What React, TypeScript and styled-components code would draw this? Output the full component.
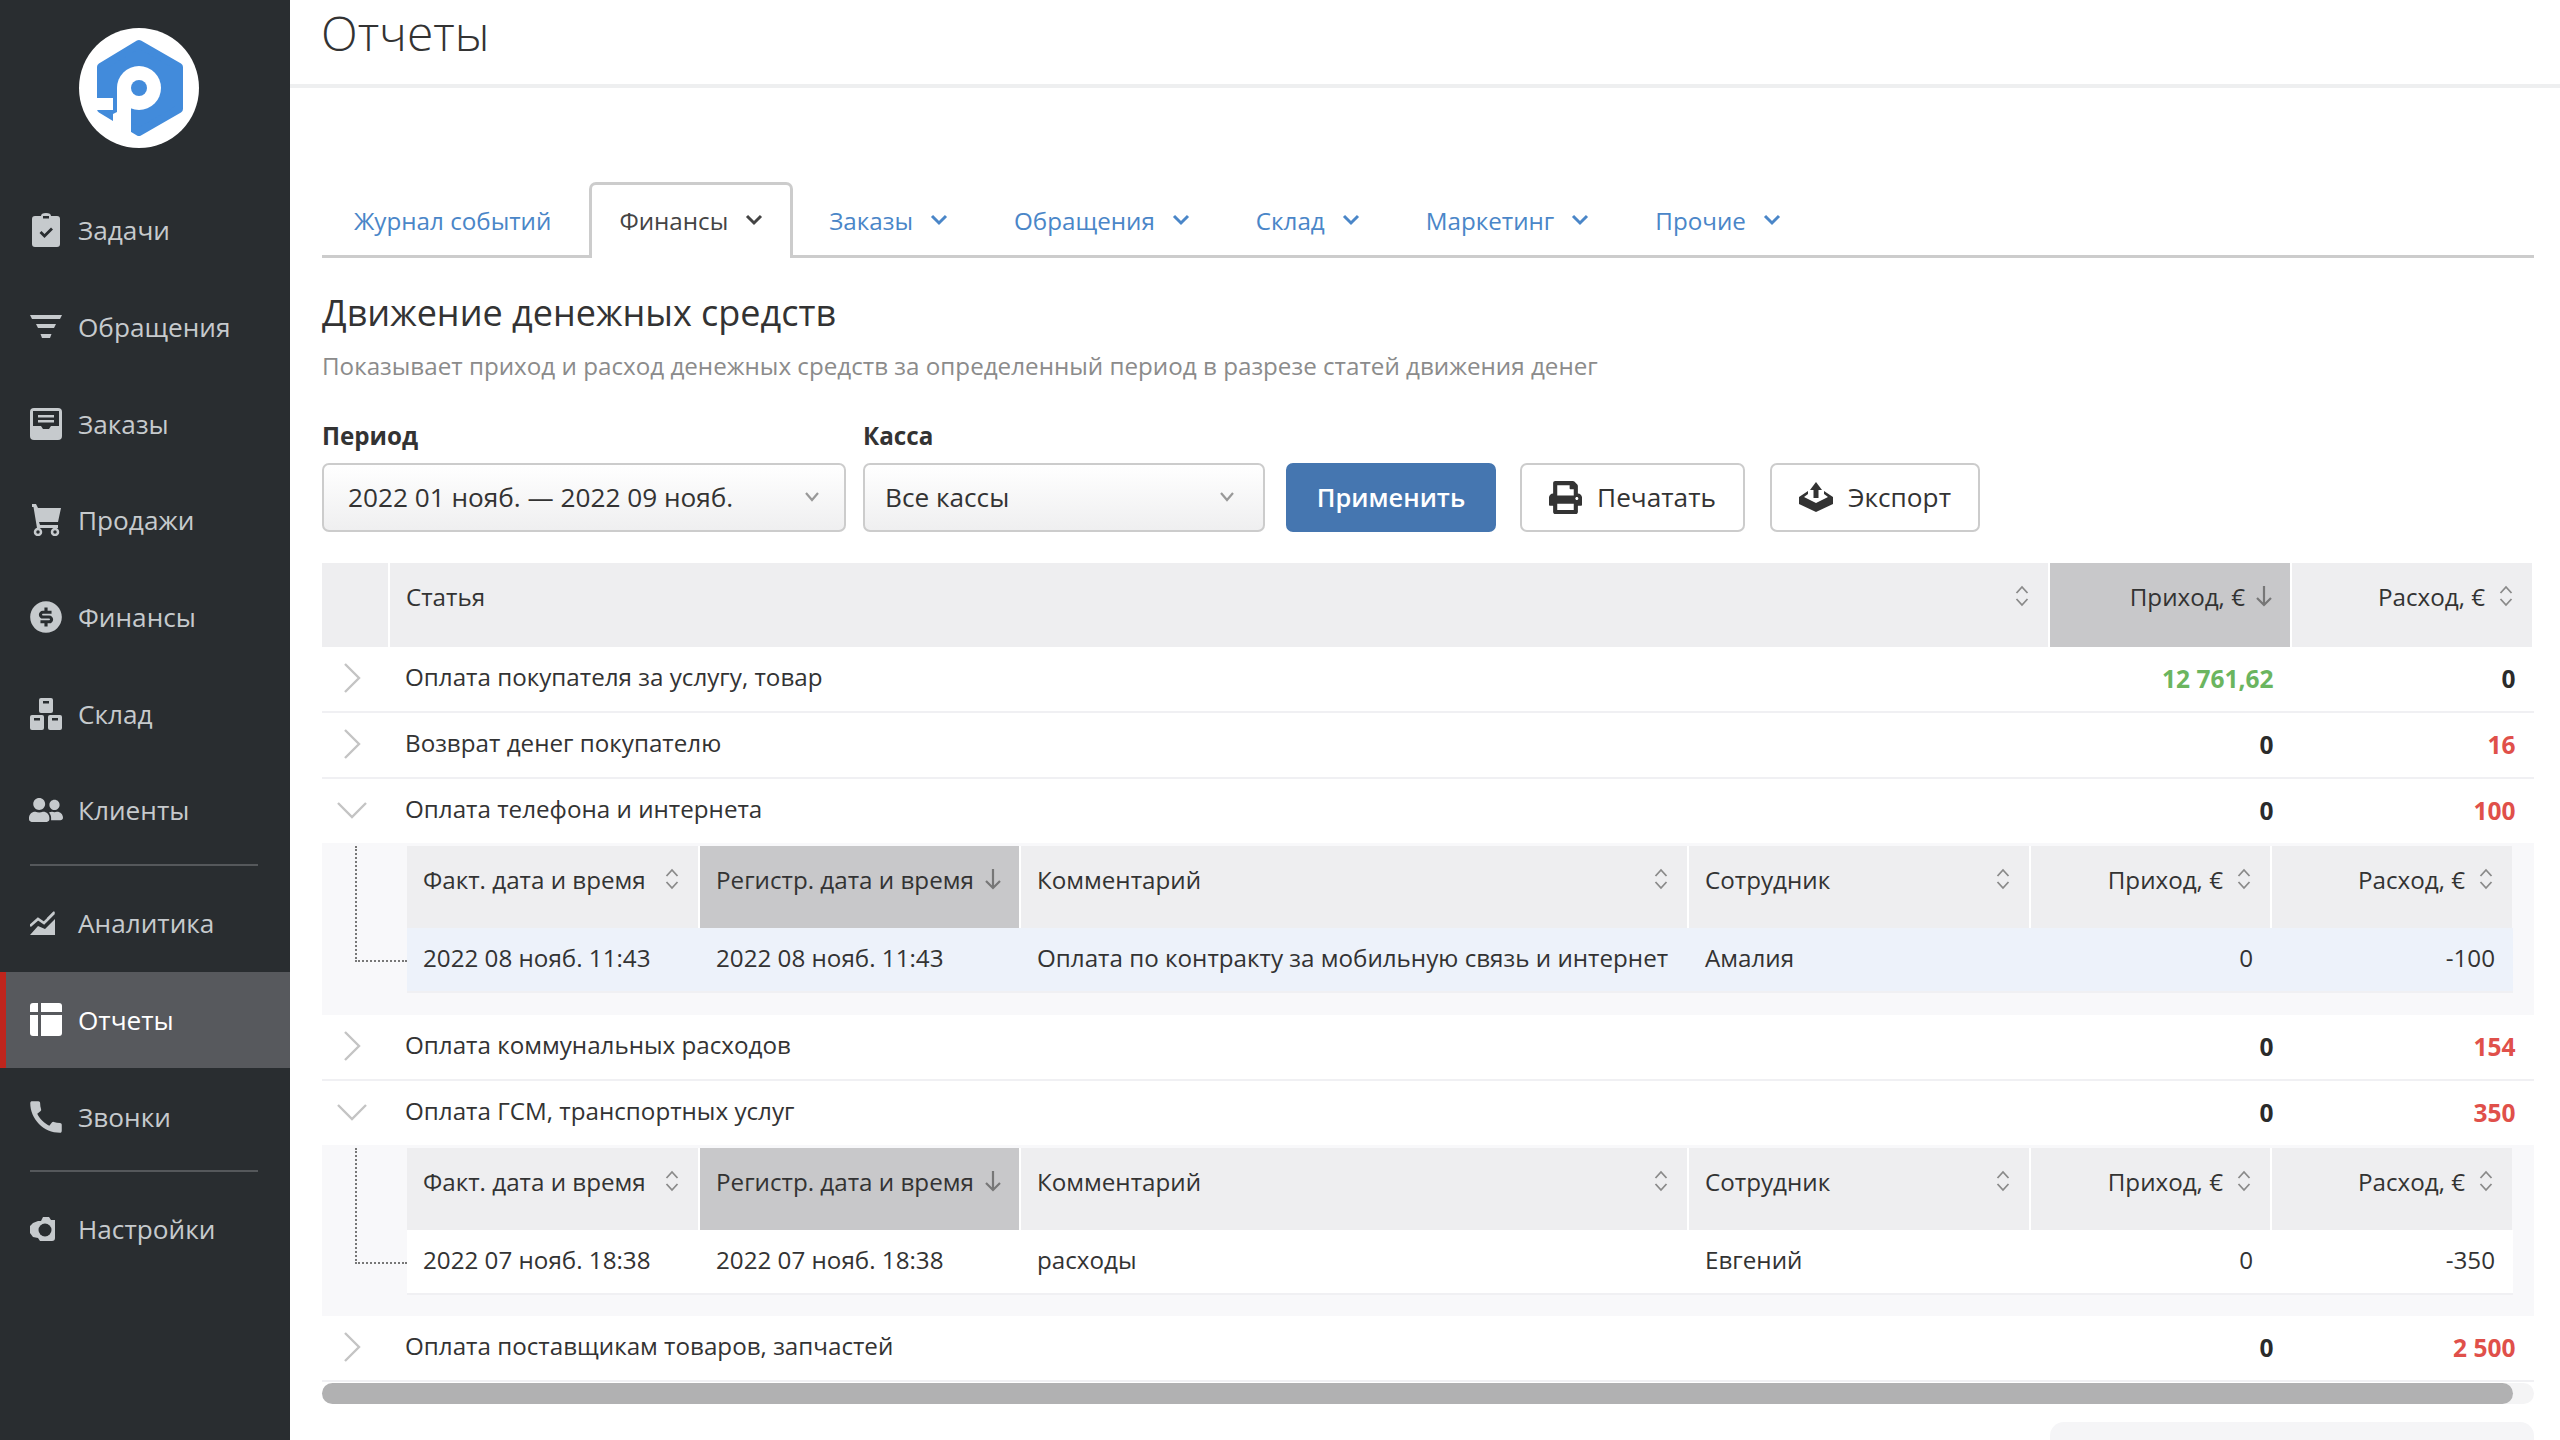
import React from "react";
import styled, { createGlobalStyle } from "styled-components";
import { FaPrint, FaUserFriends } from "react-icons/fa";
import { RiMoneyDollarCircleFill } from "react-icons/ri";
import { MdCall } from "react-icons/md";

const GlobalStyle = createGlobalStyle`
  html, body {
    margin: 0;
    padding: 0;
    background: #fff;
    font-family: "Open Sans", "Liberation Sans", sans-serif;
    color: #333;
  }
  * { box-sizing: border-box; }
`;

const Page = styled.div`
  display: flex;
  width: 2560px;
  height: 1440px;
  overflow: hidden;
`;

const Sidebar = styled.aside`
  width: 290px;
  flex-shrink: 0;
  background: #292d30;
  display: flex;
  flex-direction: column;
`;

const LogoWrap = styled.div`
  height: 182px;
  display: flex;
  justify-content: center;
  padding: 28px 13px 0 0;
`;

const NavItem = styled.div<{ $active?: boolean }>`
  height: 96.7px;
  display: flex;
  align-items: center;
  gap: 16px;
  padding-left: ${(p) => (p.$active ? "24px" : "30px")};
  font-size: 26.2px;
  color: ${(p) => (p.$active ? "#fff" : "#c6cacd")};
  background: ${(p) => (p.$active ? "#57595d" : "transparent")};
  border-left: ${(p) => (p.$active ? "6px solid #bf251d" : "0")};
`;

const NavIcon = styled.span`
  width: 32px;
  height: 34px;
  display: flex;
  align-items: center;
  justify-content: center;
  flex-shrink: 0;

  svg {
    flex-shrink: 0;
  }
`;

const NavDivider = styled.div`
  height: 2px;
  width: 228px;
  margin: 5px 0 9px 30px;
  background: #55585b;
`;

const Main = styled.main`
  flex: 1;
  min-width: 0;
`;

const Header = styled.header`
  height: 88px;
  padding-left: 31px;
  border-bottom: 4px solid #eeeff0;
`;

const Title = styled.h1`
  margin: 0;
  font-size: 48px;
  font-weight: 300;
  line-height: 66px;
  color: #333;
`;

const Content = styled.div`
  padding: 0 26px 0 32px;
`;

const TabBar = styled.nav`
  display: flex;
  height: 76px;
  margin-top: 94px;
  border-bottom: 3px solid #ccc;
`;

const Tab = styled.div<{ $active?: boolean }>`
  display: flex;
  align-items: center;
  gap: 17px;
  height: ${(p) => (p.$active ? "76px" : "73px")};
  padding: ${(p) => (p.$active ? "0 27px 3px" : "3px 32px 0")};
  margin-right: ${(p) => (p.$active ? "4px" : "2px")};
  font-size: 24.2px;
  color: ${(p) => (p.$active ? "#444" : "#4a86c8")};
  background: #fff;
  ${(p) =>
    p.$active &&
    `border: 3px solid #ccc; border-bottom: 0; border-radius: 7px 7px 0 0;`}

  &:first-child {
    margin-right: 6px;
  }
`;

const SectionTitle = styled.h2`
  margin: 30px 0 0;
  font-size: 36px;
  font-weight: 400;
  line-height: 50px;
  color: #333;
`;

const Subtitle = styled.p`
  margin: 10px 0 0;
  font-size: 24.2px;
  line-height: 36px;
  color: #8b8b8b;
`;

const Filters = styled.div`
  display: flex;
  align-items: flex-end;
  margin-top: 35px;
`;

const Field = styled.div<{ $width: number; $gap: number }>`
  width: ${(p) => p.$width}px;
  margin-right: ${(p) => p.$gap}px;
`;

const FieldLabel = styled.div`
  font-size: 24.2px;
  font-weight: 700;
  line-height: 34px;
  margin-bottom: 10px;
  color: #333;
`;

const SelectBox = styled.div<{ $pad: number; $arrowPad: number }>`
  height: 69px;
  display: flex;
  align-items: center;
  justify-content: space-between;
  padding: 0 ${(p) => p.$arrowPad}px 2px ${(p) => p.$pad}px;
  border: 2px solid #ccc;
  border-radius: 7px;
  background: linear-gradient(#fff, #efeff0);
  font-size: 26.2px;
  color: #333;
`;

const Button = styled.div<{ $width: number; $gap: number; $primary?: boolean }>`
  width: ${(p) => p.$width}px;
  margin-right: ${(p) => p.$gap}px;
  height: 69px;
  display: flex;
  align-items: center;
  justify-content: center;
  gap: 15px;
  padding-bottom: 1px;
  border-radius: 7px;
  font-size: ${(p) => (p.$primary ? "25.4px" : "26.2px")};
  font-weight: ${(p) => (p.$primary ? 600 : 400)};
  color: ${(p) => (p.$primary ? "#fff" : "#333")};
  background: ${(p) => (p.$primary ? "#4576b0" : "#fff")};
  border: 2px solid ${(p) => (p.$primary ? "#4576b0" : "#ccc")};
`;

const Table = styled.div`
  margin-top: 31px;
`;

const OuterHead = styled.div`
  display: grid;
  grid-template-columns: 66px 1fr 240px 240px;
  column-gap: 2px;
  height: 84px;
  padding-right: 2px;
`;

const OuterRow = styled.div<{ $open?: boolean }>`
  display: grid;
  grid-template-columns: 66px 1fr 240px 240px;
  column-gap: 2px;
  align-items: center;
  height: ${(p) => (p.$open ? "64px" : "66px")};
  padding: 0 2px 1.5px 0;
  border-bottom: ${(p) => (p.$open ? "0" : "2px solid #f0f0f3")};
  font-size: 24.2px;
  color: #333;
`;

const Chevron = styled.div`
  display: flex;
  justify-content: center;
  padding-right: 7px;
`;

const HeadCell = styled.div<{ $sorted?: boolean; $right?: boolean }>`
  display: flex;
  justify-content: ${(p) => (p.$right ? "flex-end" : "space-between")};
  gap: ${(p) => (p.$sorted ? "10px" : "14px")};
  padding: 16px ${(p) => (p.$sorted ? "17px" : "19px")} 0 16px;
  font-size: 24.2px;
  line-height: 36px;
  white-space: nowrap;
  color: #333;
  background: ${(p) => (p.$sorted ? "#c8c8ca" : "#eeeef0")};
`;

const RowName = styled.div`
  padding-left: 15px;
  margin-top: -4px;
`;

const Amount = styled.div<{ $tone?: "green" | "red" }>`
  text-align: right;
  padding-right: 16.5px;
  font-size: 24.5px;
  font-weight: 700;
  color: ${(p) =>
    p.$tone === "green" ? "#6bb55f" : p.$tone === "red" ? "#e0504a" : "#2b2b2b"};
`;

const SubWrap = styled.div<{ $bottom: number }>`
  position: relative;
  background: #f8f8fa;
  padding: 3px 0 ${(p) => p.$bottom}px 85px;
`;

const Connector = styled.div`
  position: absolute;
  left: 33px;
  top: 3px;
  width: 52px;
  height: 116px;
  border-left: 2px dotted #777;
  border-bottom: 2px dotted #777;
`;

const SubHead = styled.div`
  display: grid;
  grid-template-columns: 291px 319px 666px 340px 239px 240px;
  column-gap: 2px;
  height: 82px;
  width: 2105px;
  background: #fff;
`;

const SubRow = styled.div<{ $selected?: boolean }>`
  display: grid;
  grid-template-columns: 291px 319px 666px 340px 239px 240px;
  column-gap: 2px;
  align-items: center;
  height: 65px;
  width: 2106px;
  font-size: 24.2px;
  color: #333;
  background: ${(p) => (p.$selected ? "#edf2fa" : "#fff")};
  border-bottom: 2px solid #f0f0f3;
`;

const SubCell = styled.div<{ $right?: boolean }>`
  padding: 0 ${(p) => (p.$right ? "17px" : "16px")} 4px 16px;
  text-align: ${(p) => (p.$right ? "right" : "left")};
  white-space: nowrap;
`;

const ScrollTrack = styled.div`
  height: 21px;
  margin-top: 1px;
  background: #f4f4f5;
  border-radius: 11px;
`;

const ScrollThumb = styled.div`
  height: 21px;
  width: 2191px;
  background: #b1b1b2;
  border-radius: 11px;
`;

const BottomRow = styled.div`
  display: flex;
  justify-content: flex-end;
  margin-top: 18px;
`;

const TotalsBox = styled.div`
  width: 484px;
  height: 60px;
  background: #f5f5f7;
  border-radius: 14px 14px 0 0;
`;

const Logo = () => (
  <svg width="120" height="120" viewBox="-60 -60 120 120">
    <circle r="60" fill="#fff" />
    <path
      d="M0 -44 L40 -21 L40 21 L0 44 L-38 21 L-38 -21 Z"
      fill="#428bdb"
      stroke="#428bdb"
      strokeWidth="8"
      strokeLinejoin="round"
    />
    <path d="M-44 10 H-26 V22 H-44 Z" fill="#fff" />
    <circle r="22" fill="#fff" />
    <path d="M-22 0 H-8 V50 H-22 Z" fill="#fff" />
    <path d="M-26 26 L-22 24 V48 L-8 48 V52 H-26 Z" fill="#fff" />
    <circle r="8" fill="#428bdb" />
  </svg>
);

const TasksIcon = () => (
  <svg width="28" height="34" viewBox="0 0 28 34">
    <path d="M9 3 Q9 0 14 0 Q19 0 19 3 L25 3 Q28 3 28 6 V31 Q28 34 25 34 H3 Q0 34 0 31 V6 Q0 3 3 3 Z" fill="currentColor" />
    <path d="M8.5 19 L12.5 23 L20 15.5" fill="none" stroke="#292d30" strokeWidth="2.8" />
    <rect x="11" y="3" width="6" height="2.5" fill="#292d30" />
  </svg>
);

const FilterIcon = () => (
  <svg width="32" height="24" viewBox="0 0 32 24">
    <path d="M0 0 H32 L30 4 H2 Z M6 9 H26 L24 13 H8 Z M10.5 19 H21.5 L20 23 H12 Z" fill="currentColor" />
  </svg>
);

const OrdersIcon = () => (
  <svg width="32" height="32" viewBox="0 0 32 32">
    <rect width="32" height="32" rx="4" fill="currentColor" />
    <path d="M3 3 H29 V18 H21 L19 21 H13 L11 18 H3 Z" fill="#292d30" />
    <rect x="8" y="7" width="16" height="2.5" fill="currentColor" />
    <rect x="8" y="12" width="16" height="2.5" fill="currentColor" />
  </svg>
);

const CartIcon = () => (
  <svg width="30" height="32" viewBox="0 0 30 32">
    <path d="M1 0 H5 L7 4 H30 L27 18 H8 L9 21 H27 V24 H6 L2.5 3 H1 Z" fill="currentColor" />
    <circle cx="7" cy="28" r="3" fill="none" stroke="currentColor" strokeWidth="2.5" />
    <circle cx="24" cy="28" r="3" fill="none" stroke="currentColor" strokeWidth="2.5" />
  </svg>
);

const StockIcon = () => (
  <svg width="32" height="32" viewBox="0 0 32 32">
    <rect x="9" width="14" height="15" rx="2" fill="currentColor" />
    <rect y="17" width="14" height="15" rx="2" fill="currentColor" />
    <rect x="18" y="17" width="14" height="15" rx="2" fill="currentColor" />
    <rect x="13" y="3" width="6" height="2.5" fill="#292d30" />
    <rect x="4" y="20" width="6" height="2.5" fill="#292d30" />
    <rect x="22" y="20" width="6" height="2.5" fill="#292d30" />
  </svg>
);

const ChartIcon = () => (
  <svg width="32" height="26" viewBox="0 0 32 26">
    <path d="M0 16 L8 9 L14 13 L24 3" fill="none" stroke="currentColor" strokeWidth="2.6" />
    <path d="M0 25 L8 16 L15 19 L25 9 V25 Z" fill="currentColor" />
    <path d="M17 8 L24 1 L25 3 L18 10 Z" fill="currentColor" />
  </svg>
);

const ReportsIcon = () => (
  <svg width="32" height="33" viewBox="0 0 32 33">
    <path d="M3 0 H8 V9 H0 V3 Q0 0 3 0 Z" fill="currentColor" />
    <path d="M11 0 H29 Q32 0 32 3 V9 H11 Z" fill="currentColor" />
    <path d="M0 12 H8 V33 H3 Q0 33 0 30 Z" fill="currentColor" />
    <path d="M11 12 H32 V30 Q32 33 29 33 H11 Z" fill="currentColor" />
  </svg>
);

const SettingsIcon = () => (
  <svg width="32" height="26" viewBox="0 0 32 26">
    <path d="M8 5 L11 5 L13 1 H19 L21 4 H25 V22 Q25 25 22 25 H10 L8 22 L3 21 L0 17 V10 L3 7 Z" fill="currentColor" />
    <circle cx="15" cy="14" r="6.5" fill="#292d30" />
  </svg>
);

const ExportIcon = () => (
  <svg width="34" height="30" viewBox="0 0 34 30">
    <path d="M17 0 L23 8 H19.5 V16 H14.5 V8 H11 Z" fill="#333" />
    <path d="M9 9 L0 15 V22 L17 30 L34 22 V15 L25 9 V12 L29 15 L17 21 L5 15 L9 12 Z" fill="#333" />
  </svg>
);

const SmallChevron = ({ color }: { color: string }) => (
  <svg width="18" height="12" viewBox="0 0 18 12">
    <path d="M2 2 L9 9 L16 2" fill="none" stroke={color} strokeWidth="3" />
  </svg>
);

const SelectChevron = () => (
  <svg width="16" height="12" viewBox="0 0 16 12">
    <path d="M2 2 L8 9 L14 2" fill="none" stroke="#999" strokeWidth="2.2" />
  </svg>
);

const SortIcon = () => (
  <svg width="14" height="22" viewBox="0 0 14 22" style={{ flexShrink: 0, marginTop: 6 }}>
    <path d="M1.5 8 L7 2 L12.5 8 M1.5 14 L7 20 L12.5 14" fill="none" stroke="#8a8a8a" strokeWidth="1.8" />
  </svg>
);

const SortedIcon = () => (
  <svg width="18" height="22" viewBox="0 0 18 22" style={{ flexShrink: 0, marginTop: 6 }}>
    <path d="M9 1 V20 M2 13 L9 20 L16 13" fill="none" stroke="#777" strokeWidth="2.2" />
  </svg>
);

const RowRight = () => (
  <svg width="18" height="30" viewBox="0 0 18 30">
    <path d="M2 1 L16 15 L2 29" fill="none" stroke="#c4c4c4" strokeWidth="2.4" />
  </svg>
);

const RowDown = () => (
  <svg width="30" height="18" viewBox="0 0 30 18">
    <path d="M1 2 L15 16 L29 2" fill="none" stroke="#c4c4c4" strokeWidth="2.4" />
  </svg>
);

const navTop = [
  { label: "Задачи", icon: <TasksIcon /> },
  { label: "Обращения", icon: <FilterIcon /> },
  { label: "Заказы", icon: <OrdersIcon /> },
  { label: "Продажи", icon: <CartIcon /> },
  { label: "Финансы", icon: <RiMoneyDollarCircleFill size={38} /> },
  { label: "Склад", icon: <StockIcon /> },
  { label: "Клиенты", icon: <FaUserFriends size={34} /> },
];

const tabs = ["Финансы", "Заказы", "Обращения", "Склад", "Маркетинг", "Прочие"];

function SubTable(props: {
  date: string;
  comment: string;
  person: string;
  amount: string;
  selected?: boolean;
  bottom: number;
}) {
  return (
    <SubWrap $bottom={props.bottom}>
      <Connector />
      <SubHead>
        <HeadCell>
          Факт. дата и время
          <SortIcon />
        </HeadCell>
        <HeadCell $sorted>
          Регистр. дата и время
          <SortedIcon />
        </HeadCell>
        <HeadCell>
          Комментарий
          <SortIcon />
        </HeadCell>
        <HeadCell>
          Сотрудник
          <SortIcon />
        </HeadCell>
        <HeadCell $right>
          Приход, €
          <SortIcon />
        </HeadCell>
        <HeadCell $right>
          Расход, €
          <SortIcon />
        </HeadCell>
      </SubHead>
      <SubRow $selected={props.selected}>
        <SubCell>{props.date}</SubCell>
        <SubCell>{props.date}</SubCell>
        <SubCell>{props.comment}</SubCell>
        <SubCell>{props.person}</SubCell>
        <SubCell $right>0</SubCell>
        <SubCell $right>{props.amount}</SubCell>
      </SubRow>
    </SubWrap>
  );
}

function Row(props: {
  name: string;
  income: string;
  expense: string;
  incomeTone?: "green";
  expenseTone?: "red";
  open?: boolean;
}) {
  return (
    <OuterRow $open={props.open}>
      <Chevron>{props.open ? <RowDown /> : <RowRight />}</Chevron>
      <RowName>{props.name}</RowName>
      <Amount $tone={props.incomeTone}>{props.income}</Amount>
      <Amount $tone={props.expenseTone}>{props.expense}</Amount>
    </OuterRow>
  );
}

export default function App() {
  return (
    <Page>
      <GlobalStyle />
      <Sidebar>
        <LogoWrap>
          <Logo />
        </LogoWrap>
        {navTop.map((item) => (
          <NavItem key={item.label}>
            <NavIcon>{item.icon}</NavIcon>
            {item.label}
          </NavItem>
        ))}
        <NavDivider />
        <NavItem>
          <NavIcon>
            <ChartIcon />
          </NavIcon>
          Аналитика
        </NavItem>
        <NavItem $active>
          <NavIcon>
            <ReportsIcon />
          </NavIcon>
          Отчеты
        </NavItem>
        <NavItem>
          <NavIcon>
            <MdCall size={42} />
          </NavIcon>
          Звонки
        </NavItem>
        <NavDivider />
        <NavItem>
          <NavIcon>
            <SettingsIcon />
          </NavIcon>
          Настройки
        </NavItem>
      </Sidebar>
      <Main>
        <Header>
          <Title>Отчеты</Title>
        </Header>
        <Content>
          <TabBar>
            <Tab>Журнал событий</Tab>
            {tabs.map((t, i) => (
              <Tab key={t} $active={i === 0}>
                {t}
                <SmallChevron color={i === 0 ? "#444" : "#4a86c8"} />
              </Tab>
            ))}
          </TabBar>
          <SectionTitle>Движение денежных средств</SectionTitle>
          <Subtitle>
            Показывает приход и расход денежных средств за определенный период в разрезе статей
            движения денег
          </Subtitle>
          <Filters>
            <Field $width={524} $gap={17}>
              <FieldLabel>Период</FieldLabel>
              <SelectBox $pad={24} $arrowPad={24}>
                2022 01 нояб. — 2022 09 нояб.
                <SelectChevron />
              </SelectBox>
            </Field>
            <Field $width={402} $gap={21}>
              <FieldLabel>Касса</FieldLabel>
              <SelectBox $pad={20} $arrowPad={28}>
                Все кассы
                <SelectChevron />
              </SelectBox>
            </Field>
            <Button $primary $width={210} $gap={24}>
              Применить
            </Button>
            <Button $width={225} $gap={25}>
              <FaPrint size={33} />
              Печатать
            </Button>
            <Button $width={210} $gap={0}>
              <ExportIcon />
              Экспорт
            </Button>
          </Filters>
          <Table>
            <OuterHead>
              <HeadCell />
              <HeadCell>
                Статья
                <SortIcon />
              </HeadCell>
              <HeadCell $sorted $right>
                Приход, €
                <SortedIcon />
              </HeadCell>
              <HeadCell $right>
                Расход, €
                <SortIcon />
              </HeadCell>
            </OuterHead>
            <Row name="Оплата покупателя за услугу, товар" income="12 761,62" incomeTone="green" expense="0" />
            <Row name="Возврат денег покупателю" income="0" expense="16" expenseTone="red" />
            <Row name="Оплата телефона и интернета" income="0" expense="100" expenseTone="red" open />
            <SubTable
              selected
              bottom={22}
              date="2022 08 нояб. 11:43"
              comment="Оплата по контракту за мобильную связь и интернет"
              person="Амалия"
              amount="-100"
            />
            <Row name="Оплата коммунальных расходов" income="0" expense="154" expenseTone="red" />
            <Row name="Оплата ГСМ, транспортных услуг" income="0" expense="350" expenseTone="red" open />
            <SubTable
              bottom={21}
              date="2022 07 нояб. 18:38"
              comment="расходы"
              person="Евгений"
              amount="-350"
            />
            <Row name="Оплата поставщикам товаров, запчастей" income="0" expense="2 500" expenseTone="red" />
          </Table>
          <ScrollTrack>
            <ScrollThumb />
          </ScrollTrack>
          <BottomRow>
            <TotalsBox />
          </BottomRow>
        </Content>
      </Main>
    </Page>
  );
}
